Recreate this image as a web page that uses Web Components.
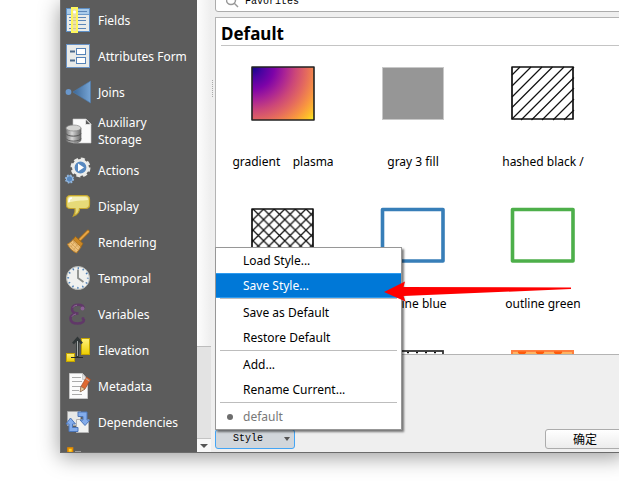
<!DOCTYPE html>
<html lang="en">
<head>
<meta charset="utf-8">
<title>Layer Properties</title>
<style>
    html, body {
        height: 100%;
    }

    body {
        margin: 0;
        overflow: hidden;
        background: #fff;
        color: #000;
        font: 12px/17px "Noto Sans", "Noto Sans CJK SC", sans-serif;
    }
</style>
</head>
<body>

<properties-dialog>
    <side-nav slot="nav">
        <nav-item icon="fields">Fields</nav-item>
        <nav-item icon="form">Attributes Form</nav-item>
        <nav-item icon="joins">Joins</nav-item>
        <nav-item icon="storage">Auxiliary Storage</nav-item>
        <nav-item icon="actions">Actions</nav-item>
        <nav-item icon="display">Display</nav-item>
        <nav-item icon="rendering">Rendering</nav-item>
        <nav-item icon="temporal">Temporal</nav-item>
        <nav-item icon="variables">Variables</nav-item>
        <nav-item icon="elevation">Elevation</nav-item>
        <nav-item icon="metadata">Metadata</nav-item>
        <nav-item icon="dependencies">Dependencies</nav-item>
        <nav-item icon="legend"></nav-item>
    </side-nav>

    <search-box slot="search" value="Favorites"></search-box>

    <style-list slot="list" heading="Default">
        <style-swatch kind="plasma">gradient    plasma</style-swatch>
        <style-swatch kind="gray">gray 3 fill</style-swatch>
        <style-swatch kind="hashed">hashed black /</style-swatch>
        <style-swatch kind="crossed"></style-swatch>
        <style-swatch kind="blue">outline blue</style-swatch>
        <style-swatch kind="green">outline green</style-swatch>
        <style-swatch kind="crossed"></style-swatch>
        <style-swatch kind="dots"></style-swatch>
        <style-swatch kind="orange"></style-swatch>
    </style-list>

    <style-menu slot="actions" label="Style">
        <menu-item>Load Style...</menu-item>
        <menu-item active>Save Style...</menu-item>
        <menu-line></menu-line>
        <menu-item>Save as Default</menu-item>
        <menu-item>Restore Default</menu-item>
        <menu-line></menu-line>
        <menu-item>Add...</menu-item>
        <menu-item>Rename Current...</menu-item>
        <menu-line></menu-line>
        <menu-item disabled checked>default</menu-item>
    </style-menu>
    <push-button slot="actions">确定</push-button>
</properties-dialog>

<pointer-arrow></pointer-arrow>

<script>
const ICONS = {
    fields: `
        <rect x=".5" y=".5" width="23" height="23" fill="#e9ebe9" stroke="#5e8fc5"/>
        <rect x="1" y="1" width="22" height="5" fill="#a9cbea"/>
        <path d="M1 6.500h22" stroke="#6d9acb"/>
        <path d="M12 3.500h9M12 9.500h8M12 12.500h8M12 16.500h8M12 20.500h8M3 9.500h2M3 12.500h2M3 16.500h2M3 20.500h2" stroke="#5b86b8"/>
        <rect x="6" y="0" width="5" height="24" fill="#ebe0ae" stroke="#fdf65c" stroke-width="2"/>
        <path d="M7 9.500h3M7 12.500h3M7 16.500h3M7 20.500h3" stroke="#d7c989"/>
        <circle cx="8.500" cy="4" r="1.500" fill="#fff"/>`,
    form: `
        <rect x=".5" y=".5" width="23" height="23" fill="#e9ebe9" stroke="#6992c4"/>
        <rect x="10.500" y="4.500" width="9" height="6" fill="#fff" stroke="#5583b8"/>
        <rect x="10.500" y="13.500" width="9" height="6" fill="#fff" stroke="#5583b8"/>
        <path d="M4 7.500h5M4 16.500h5" stroke="#4c6a8c" stroke-width="2"/>`,
    joins: `
        <defs><linearGradient id="j"><stop stop-color="#3c6796"/><stop offset="1" stop-color="#75a4d5"/></linearGradient></defs>
        <circle cx="2.500" cy="12" r="2.900" fill="#6a97cb"/>
        <path d="M7 12L24.500 1v22z" fill="url(#j)" stroke="#4c7cb0" stroke-width=".6"/>`,
    storage: `
        <path d="M7 0h13l5 5v19H7z" fill="#fbfbfb" stroke="#c9c9c9" stroke-width=".6"/>
        <path d="M19.500 0v5.500H25z" fill="#5c5c5c" stroke="#eee" stroke-width=".8"/>
        <defs><linearGradient id="s"><stop stop-color="#777"/><stop offset=".4" stop-color="#d8d8d8"/><stop offset="1" stop-color="#666"/></linearGradient></defs>
        <path d="M0 9v12c0 4 15 4 15 0V9z" fill="url(#s)" stroke="#666" stroke-width=".7"/>
        <path d="M0 14.500c1 3.500 14 3.500 15 0M0 19.500c1 3.500 14 3.500 15 0" fill="none" stroke="#555"/>
        <ellipse cx="7.500" cy="9" rx="7.500" ry="3" fill="#d4d4d2" stroke="#888" stroke-width=".7"/>`,
    actions: `
        <circle cx="14.500" cy="9.500" r="8.500" fill="none" stroke="#e9e9e6" stroke-width="3" stroke-dasharray="4 2.675"/>
        <circle cx="14.500" cy="9.500" r="7.200" fill="#5889c0" stroke="#ededea" stroke-width="2.600"/>
        <path d="M12 5.500v8l6-4z" fill="#fff"/>
        <circle cx="3.500" cy="21" r="3.800" fill="none" stroke="#8eb4dc" stroke-width="1.600" stroke-dasharray="1.700 1.284"/>
        <circle cx="3.500" cy="21" r="3.200" fill="#5889c0" stroke="#9dbcde"/>`,
    display: `
        <path d="M4.500 1.500h15c3 0 4 1.500 4 4v5c0 3-1 4-4 4h-6c0 3-2 6-6 7.500 1.500-2.500 2-4.500 1.500-7.500H4.500c-3 0-4-1-4-4v-5c0-2.500 1-4 4-4z" fill="#e6da78" stroke="#c4a42c" stroke-width="1.200"/>
        <path d="M2 9V5.500C2 3.500 3 3 5 3h14c2.500 0 3 1 3 3-6 1-13 0-20 3z" fill="#f4efb9"/>
        <path d="M3 8c0-3 1-4 3-4" fill="none" stroke="#fff" stroke-width="1.500"/>`,
    rendering: `
        <path d="M14 9.500L22 1.500" stroke="#a16b1b" stroke-width="3.600" stroke-linecap="round"/>
        <path d="M14 9.500L22 1.500" stroke="#e7a444" stroke-width="2" stroke-linecap="round"/>
        <path d="M9.500 6.500L17 13.500l-2 3.500-8-7.500z" fill="#cb8825" stroke="#9a6518" stroke-width=".8"/>
        <path d="M7 9.500l8 7.500-4.500 6c-3-1.500-7-4-9-9 2-.5 4-2.500 5.500-4.500z" fill="#edc17c" stroke="#b67a25"/>
        <path d="M3 14.500l7.500 7.500M5 13l7 7M7 11l6.500 7M5 17l4-6M8 19.500l4-6" stroke="#cf9a4c" stroke-width=".7"/>`,
    temporal: `
        <circle cx="12" cy="12" r="11.500" fill="#f0f1ef" stroke="#b9bcb9"/>
        <circle cx="12" cy="12" r="9.800" fill="none" stroke="#4d7fb7" stroke-width="1.800" stroke-dasharray="1.400 3.731" stroke-dashoffset=".7"/>
        <path d="M12 3.500V12l5.500 4" fill="none" stroke="#8b8e8b" stroke-width="1.800"/>`,
    variables: `
        <path d="M17.500 6.500c0-3-2.500-3.800-5-3.800-4 0-6.500 1.800-6.500 4.500 0 2.800 2.500 4.300 6.500 4.300-5 0-8 1.700-8 5 0 3.500 3 5 7 5 3.500 0 6.500-1.300 6.500-4.500" fill="none" stroke="#603868" stroke-width="2.600"/>
        <circle cx="16.500" cy="6.500" r="1.900" fill="#8c6096"/>
        <circle cx="17" cy="16.500" r="1.500" fill="#603868"/>
        <path d="M7 5.500c1-1.500 2-2 4-2.200M6 14.500c1-1.500 2-2 4-2.500" fill="none" stroke="#9c79a5" stroke-width=".8"/>`,
    elevation: `
        <defs><linearGradient id="e" x2="0" y2="1"><stop stop-color="#fff17c"/><stop offset="1" stop-color="#eccd00"/></linearGradient></defs>
        <rect x="15.500" y=".5" width="8" height="16" fill="url(#e)" stroke="#c5a500"/>
        <rect x=".5" y="15.500" width="8" height="8" fill="url(#e)" stroke="#c5a500"/>
        <path d="M5 19.500h12" stroke="#272b2b"/>
        <path d="M11.500 19V2M7 5.500L11.500 .5 16 5.500" fill="none" stroke="#303637" stroke-width="2.600"/>
        <path d="M11.500 18V3" stroke="#a7acac"/>`,
    metadata: `
        <path d="M3.500-.5h13l5 6v19h-18z" fill="#fbfbfb" stroke="#c7c7c7"/>
        <path d="M16.500 0v5.500h5z" fill="#e1e1e1" stroke="#bbb" stroke-width=".6"/>
        <path d="M6 3.500h9M6 7.500h10M6 12.500h9M6 16.500h7M6 20.500h10" stroke="#aaa"/>
        <path d="M15 12.500L20.500 3l4 2.500-5.500 9.500-4.500 2.500z" fill="#df6930" stroke="#9f4927" stroke-width=".7"/>
        <path d="M19.500 4.500l4 2.500" stroke="#b9b9b9"/>
        <path d="M15 12.500l4 2.500-5 3z" fill="#e8c89b" stroke="#6e5841" stroke-width=".5"/>`,
    dependencies: `
        <path d="M1.500 1.500h13v14h-13z" fill="#e7e8e7" stroke="#a6a6a6"/>
        <path d="M10.500 9.500h12v13h-12z" fill="#f1f2f1" stroke="#b3b3b3"/>
        <path d="M12 2h9v8h3l-5 5.500-5-5.500h3V6.500h-5z" fill="#83aceb" stroke="#4c76b8"/>
        <path d="M12 21.500H3V14H0l4.500-6 5 6h-3v3.500H12z" fill="#83aceb" stroke="#4c76b8"/>`,
    legend: `
        <rect x="2" y="2" width="4.500" height="4.500" fill="#ffd22b" stroke="#e58b00" stroke-width="1.600"/>
        <path d="M9 5.500h6" stroke="#9b9b9b"/>`
};

const SWATCHES = {
    plasma: `
        <defs><radialGradient id="p" gradientUnits="userSpaceOnUse" cx="1" cy="1" r="82">
            <stop stop-color="#0d0887"/><stop offset=".13" stop-color="#4b03a1"/><stop offset=".27" stop-color="#7d03a8"/>
            <stop offset=".4" stop-color="#a82296"/><stop offset=".53" stop-color="#cb4679"/><stop offset=".67" stop-color="#e56b5d"/>
            <stop offset=".8" stop-color="#f89441"/><stop offset=".92" stop-color="#fdc328"/><stop offset="1" stop-color="#f0f921"/>
        </radialGradient></defs>
        <rect x="1" y="1" width="62" height="53" fill="url(#p)" stroke="#222" stroke-width="1.600" stroke-linejoin="round"/>`,
    gray: `<rect x="1.500" y="1.500" width="61" height="52" fill="#969696" stroke="#c8c8c8"/>`,
    hashed: `
        <path d="M1 9l8-8M1 20L20 1M1 31L31 1M1 41.500L41.500 1M1 53L53 1M10 54L63 1M20.500 54L63 11.500M31 54l32-32M42 54l21-21M53 54l10-10" stroke="#111" stroke-width="1.200"/>
        <rect x="1" y="1" width="61" height="52" fill="none" stroke="#111" stroke-width="1.700" stroke-linejoin="round"/>`,
    crossed: `
        <defs><pattern id="x" width="10.600" height="10.600" patternUnits="userSpaceOnUse" x="2" y="1">
            <path d="M-1-1l13 13M-1 11.600l13-13" stroke="#111" stroke-width="1.300"/>
        </pattern></defs>
        <rect x="1" y="1" width="61" height="52" fill="url(#x)" stroke="#111" stroke-width="1.700" stroke-linejoin="round"/>`,
    blue: `<rect x="1.500" y="1.500" width="60.500" height="51.500" fill="none" stroke="#377eb8" stroke-width="3.600" stroke-linejoin="round"/>`,
    green: `<rect x="1.500" y="1.500" width="60.500" height="51.500" fill="none" stroke="#4daf4a" stroke-width="3.600" stroke-linejoin="round"/>`,
    dots: `
        <path d="M8 2.500h54M4 7h56" stroke="#111" stroke-width="1.500" stroke-dasharray="2 7"/>
        <rect x="1" y="1" width="61" height="52" fill="none" stroke="#333" stroke-width="1.800"/>`,
    orange: `
        <rect x="1" y="1" width="61" height="52" fill="#fdb462" stroke="#ff7f3f" stroke-width="2"/>
        <path d="M7 2h8l-4 5zM25 2h8l-4 5zM43 2h8l-4 5z" fill="#ff5a0a" stroke="#ff5a0a"/>`
};

class PropertiesDialog extends HTMLElement {
    constructor() {
        super();
        this.attachShadow({ mode: 'open' });
    }

    connectedCallback() {
        this.shadowRoot.innerHTML = `
        <style>
            /* The window runs past the top and right edges of the viewport */
            :host {
                display: flex;
                box-sizing: border-box;
                height: calc(100% - 33px);
                margin: 0 -6px 0 60px;
                border-bottom: 1px solid #6b6b6b;
                background: #efefef;
                box-shadow: 0 4px 20px rgba(0, 0, 0, 0.4);
            }

            .splitter {
                flex: none;
                display: flex;
                align-items: center;
                width: 4px;
            }

            .pane {
                flex: 1;
                min-width: 0;
                display: flex;
                flex-direction: column;
                margin-top: -12px;
            }

            .grip {
                height: 17px;
                margin: 0 0 276px 1px;
                border-left: 1px dotted #aaa;
            }

            ::slotted(style-list) {
                flex: 1;
                min-height: 0;
                margin-top: 5px;
            }

            footer {
                flex: none;
                display: flex;
                justify-content: space-between;
                align-items: flex-end;
                height: 94px;
                padding-bottom: 3px;
            }
        </style>

        <slot name="nav"></slot>
        <div class="splitter"><div class="grip"></div></div>
        <div class="pane">
            <slot name="search"></slot>
            <slot name="list"></slot>
            <footer><slot name="actions"></slot></footer>
        </div>
        `;
    }
}

class SideNav extends HTMLElement {
    constructor() {
        super();
        this.attachShadow({ mode: 'open' });
    }

    connectedCallback() {
        this.shadowRoot.innerHTML = `
        <style>
            :host {
                flex: none;
                display: flex;
                width: 151px;
            }

            nav {
                flex: 1;
                overflow: hidden;
                padding-top: 2px;
                border-left: 1px solid #6f6f6f;
                background: #5c5c5c;
                color: #fff;
            }

            .scrollbar {
                flex: none;
                display: flex;
                flex-direction: column;
                width: 14px;
                background: #e3e3e3;
            }

            .thumb {
                flex: 0 0 347px;
                box-sizing: border-box;
                border-bottom: 1px solid #bcbcbc;
                background: linear-gradient(to right, #fdfdfd, #eee);
            }

            button {
                display: flex;
                align-items: center;
                justify-content: center;
                height: 14px;
                margin-top: auto;
                padding: 0;
                border: 0;
                border-top: 1px solid #c4c4c4;
                background: #f8f8f8;
            }
        </style>

        <nav><slot></slot></nav>
        <div class="scrollbar">
            <div class="thumb"></div>
            <button aria-label="Scroll down">
                <svg width="8" height="4"><path d="M0 0h8L4 4z" fill="#555"/></svg>
            </button>
        </div>
        `;
    }
}

class NavItem extends HTMLElement {
    constructor() {
        super();
        this.attachShadow({ mode: 'open' });
    }

    connectedCallback() {
        const icon = this.getAttribute('icon');

        this.shadowRoot.innerHTML = `
        <style>
            :host {
                display: block;
            }

            a {
                display: flex;
                align-items: center;
                gap: 8px;
                min-height: 36px;
                padding: 0 5px;
                color: inherit;
                text-decoration: none;
            }

            svg {
                flex: none;
                overflow: visible;
            }

            span {
                padding: 4px 0;
            }
        </style>

        <a href="#${icon}" aria-label="${this.textContent || icon}">
            <svg width="24" height="24" viewBox="0 0 24 24">${ICONS[icon]}</svg>
            <span><slot></slot></span>
        </a>
        `;
    }
}

class SearchBox extends HTMLElement {
    constructor() {
        super();
        this.attachShadow({ mode: 'open' });
    }

    connectedCallback() {
        this.shadowRoot.innerHTML = `
        <style>
            :host {
                flex: none;
                display: flex;
                align-items: center;
                gap: 4px;
                box-sizing: border-box;
                height: 24px;
                padding: 4px 0 0 10px;
                border: 1px solid #acacac;
                border-radius: 3px;
                background: #fff;
            }

            input {
                flex: 1;
                min-width: 0;
                padding: 0 0 0 1px;
                border: 0;
                outline: none;
                background: none;
                color: #000;
                font: 10px/14px "Liberation Mono", monospace;
            }
        </style>

        <svg width="14" height="14" fill="none" stroke="#999" stroke-width="1.500">
            <circle cx="5" cy="5" r="4.500"/><path d="M8 8l4 4"/>
        </svg>
        <input type="text" aria-label="Filter symbols" value="${this.getAttribute('value')}">
        `;
    }
}

class StyleList extends HTMLElement {
    constructor() {
        super();
        this.attachShadow({ mode: 'open' });
    }

    connectedCallback() {
        this.shadowRoot.innerHTML = `
        <style>
            :host {
                display: block;
                box-sizing: border-box;
                overflow: hidden;
                padding-left: 2px;
                border: 1px solid #b4b4b4;
                background: #fff;
            }

            h2 {
                margin: 5px 0 0 3px;
                border-bottom: 1px solid #c4c4c4;
                font-size: 17px;
                line-height: 22px;
                font-weight: bold;
            }

            .grid {
                display: grid;
                grid-template-columns: repeat(auto-fill, 130px);
                grid-auto-rows: 142px;
                padding-top: 20px;
            }
        </style>

        <h2>${this.getAttribute('heading')}</h2>
        <div class="grid"><slot></slot></div>
        `;
    }
}

class StyleSwatch extends HTMLElement {
    constructor() {
        super();
        this.attachShadow({ mode: 'open' });
    }

    connectedCallback() {
        this.shadowRoot.innerHTML = `
        <style>
            :host {
                display: flex;
                flex-direction: column;
                align-items: center;
                gap: 32px;
                white-space: pre;
            }

            svg {
                flex: none;
                overflow: visible;
            }
        </style>

        <svg width="64" height="55">${SWATCHES[this.getAttribute('kind')]}</svg>
        <span><slot></slot></span>
        `;
    }
}

class StyleMenu extends HTMLElement {
    constructor() {
        super();
        this.attachShadow({ mode: 'open' });
    }

    connectedCallback() {
        this.shadowRoot.innerHTML = `
        <style>
            :host {
                display: block;
                position: relative;
            }

            .trigger {
                display: flex;
                align-items: center;
                justify-content: space-between;
                box-sizing: border-box;
                width: 80px;
                height: 20px;
                padding: 0 4px 0 17px;
                border: 1px solid #43a5f5;
                border-radius: 3px;
                background: #d1d6db;
                color: #000;
                font: 10px/14px "Liberation Mono", monospace;
            }

            .menu {
                position: absolute;
                left: 0;
                bottom: calc(100% - 1px);
                box-sizing: border-box;
                width: 187px;
                border: 1px solid #979797;
                background: #fff;
                box-shadow: 2px 2px 2px rgba(0, 0, 0, 0.5);
            }
        </style>

        <button class="trigger" aria-haspopup="menu" aria-expanded="true">
            ${this.getAttribute('label')}
            <svg width="6" height="4"><path d="M0 0h6L3 4z" fill="#555"/></svg>
        </button>
        <div class="menu" role="menu"><slot></slot></div>
        `;
    }
}

class MenuItem extends HTMLElement {
    constructor() {
        super();
        this.attachShadow({ mode: 'open' });
    }

    connectedCallback() {
        const disabled = this.hasAttribute('disabled') ? 'disabled' : '';

        this.shadowRoot.innerHTML = `
        <style>
            :host {
                display: block;
            }

            button {
                display: flex;
                align-items: center;
                box-sizing: border-box;
                width: 100%;
                height: 25px;
                padding: 0;
                border: 0;
                background: none;
                color: #000;
                font: inherit;
                text-align: left;
            }

            button:disabled {
                color: #787878;
            }

            :host([active]) button {
                border: solid #2d9bf0;
                border-width: 1px 0;
                background: #0078d7;
                color: #fff;
            }

            .mark {
                display: flex;
                justify-content: center;
                width: 27px;
            }

            :host([checked]) .mark::before {
                content: "";
                width: 6px;
                height: 6px;
                border-radius: 50%;
                background: #6d6d6d;
            }
        </style>

        <button role="menuitem" ${disabled}><span class="mark"></span><slot></slot></button>
        `;
    }
}

class MenuLine extends HTMLElement {
    constructor() {
        super();
        this.attachShadow({ mode: 'open' });
        this.shadowRoot.innerHTML = `
        <style>
            :host {
                display: block;
                height: 1px;
                margin: 0 4px 1px;
                background: #bdbdbd;
            }
        </style>
        `;
    }
}

class PushButton extends HTMLElement {
    constructor() {
        super();
        this.attachShadow({ mode: 'open' });
    }

    connectedCallback() {
        this.shadowRoot.innerHTML = `
        <style>
            button {
                display: block;
                box-sizing: border-box;
                width: 80px;
                height: 20px;
                padding: 0;
                border: 1px solid #acacac;
                border-radius: 3px;
                background: linear-gradient(#fff, #ececec);
                color: #000;
                font: 12px/16px "Noto Sans CJK SC", sans-serif;
            }
        </style>

        <button><slot></slot></button>
        `;
    }
}

class PointerArrow extends HTMLElement {
    constructor() {
        super();
        this.attachShadow({ mode: 'open' });
        this.shadowRoot.innerHTML = `
        <style>
            /* Floats over the dialog, aimed at the active menu item */
            :host {
                display: block;
                position: absolute;
                left: 384px;
                top: 281px;
                pointer-events: none;
            }

            svg {
                display: block;
            }
        </style>

        <svg width="188" height="21">
            <path d="M0 11L21 0.500L19.500 6L187 6.500V8L19.500 15L21.500 20.500z" fill="#f00"/>
        </svg>
        `;
    }
}

customElements.define('properties-dialog', PropertiesDialog);
customElements.define('side-nav', SideNav);
customElements.define('nav-item', NavItem);
customElements.define('search-box', SearchBox);
customElements.define('style-list', StyleList);
customElements.define('style-swatch', StyleSwatch);
customElements.define('style-menu', StyleMenu);
customElements.define('menu-item', MenuItem);
customElements.define('menu-line', MenuLine);
customElements.define('push-button', PushButton);
customElements.define('pointer-arrow', PointerArrow);
</script>
</body>
</html>
